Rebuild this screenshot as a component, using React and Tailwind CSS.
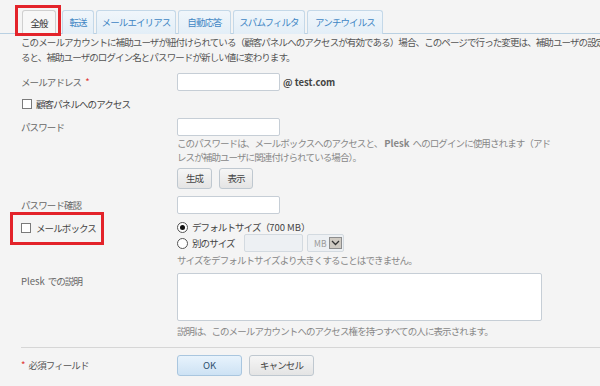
import React from 'react';

const tabs = [
  { label: '全般', w: 'w-[34px]', active: true },
  { label: '転送', w: 'w-[32px] ml-[6px]' },
  { label: 'メールエイリアス', w: 'w-[80px] ml-[2px]' },
  { label: '自動応答', w: 'w-[53px] ml-[2px]' },
  { label: 'スパムフィルタ', w: 'w-[72px] ml-[2px]' },
  { label: 'アンチウイルス', w: 'w-[76px] ml-[2px]' },
];

function Checkbox() {
  return <span className="inline-block w-[10px] h-[10px] border border-[#7a7a7a] bg-white shrink-0" />;
}

function Radio({ checked }) {
  return (
    <span className="w-[11px] h-[11px] rounded-full border border-[#555] bg-white flex items-center justify-center shrink-0">
      {checked && <span className="w-[5px] h-[5px] rounded-full bg-[#111]" />}
    </span>
  );
}

function Input({ className = '' }) {
  return <div className={`h-[18px] w-[103px] bg-white border border-[#c6ced6] rounded-[2px] ${className}`} />;
}

function GreyButton({ children, className = '' }) {
  return (
    <button className={`h-[21px] border border-[#bfc8d0] rounded-[3px] bg-gradient-to-b from-[#f6f6f6] to-[#e4e4e4] text-[#444] flex items-center justify-center ${className}`}>
      {children}
    </button>
  );
}

export default function App() {
  return (
    <div className="relative w-[600px] h-[386px] overflow-hidden bg-[#f4f4f4] text-[9.5px] tracking-[-0.9px] leading-[15px] text-[#666] font-['Noto_Sans_CJK_JP','Noto_Sans',sans-serif]">
      {/* tabs */}
      <div className="pt-[10px] pl-[22px] flex border-b border-[#b9d0e2] h-[34px]">
        {tabs.map((t) => (
          <div
            key={t.label}
            className={`${t.w} h-[24px] flex items-center justify-center rounded-t-[3px] border border-b-0 ${
              t.active
                ? 'bg-[#f7f7f7] border-[#cfcfcf] text-[#333] -mb-px h-[25px]'
                : 'bg-gradient-to-b from-[#f0f6fb] to-[#e3eef7] border-[#c4d8e8] text-[#3f86c4]'
            }`}
          >
            {t.label}
          </div>
        ))}
      </div>

      {/* intro */}
      <div className="pl-[21px] pt-[1px] text-[#555] whitespace-nowrap">
        <p>このメールアカウントに補助ユーザが紐付けられている（顧客パネルへのアクセスが有効である）場合、このページで行った変更は、補助ユーザの設定</p>
        <p>ると、補助ユーザのログイン名とパスワードが新しい値に変わります。</p>
      </div>

      <div className="pl-[21px]">
        {/* email */}
        <div className="flex items-center mt-[8px] h-[18px]">
          <div className="w-[156px]">
            メールアドレス<span className="ml-[4px] text-[#e0332e]">*</span>
          </div>
          <Input />
          <span className="ml-[3px] font-bold text-[#444] tracking-normal">@ test.com</span>
        </div>

        {/* panel access */}
        <div className="flex items-center gap-[4px] mt-[4px] h-[18px] pl-[1px] text-[#444]">
          <Checkbox />
          <span>顧客パネルへのアクセス</span>
        </div>

        {/* password */}
        <div className="flex mt-[5px]">
          <div className="w-[156px] leading-[18px]">パスワード</div>
          <div>
            <Input />
            <p className="leading-[14px] text-[#888] whitespace-nowrap">
              このパスワードは、メールボックスへのアクセスと、<span className="ml-[2px] mr-[3px] font-semibold tracking-normal">Plesk</span>へのログインに使用されます（アド
              <br />
              レスが補助ユーザに関連付けられている場合）。
            </p>
            <div className="flex gap-[7px] mt-[4px]">
              <GreyButton className="w-[35px]">生成</GreyButton>
              <GreyButton className="w-[34px]">表示</GreyButton>
            </div>
          </div>
        </div>

        {/* confirm */}
        <div className="flex items-center mt-[7px] h-[18px]">
          <div className="w-[156px]">パスワード確認</div>
          <Input />
        </div>

        {/* mailbox */}
        <div className="flex mt-[6px]">
          <div className="w-[156px] flex items-center gap-[5px] h-[16px] text-[#444]">
            <Checkbox />
            <span>メールボックス</span>
          </div>
          <div>
            <div className="flex items-center gap-[4px] h-[14px] text-[#444]">
              <Radio checked />
              <span>
                デフォルトサイズ（<span className="tracking-normal">700 MB</span>）
              </span>
            </div>
            <div className="flex items-center h-[18px] text-[#444]">
              <Radio />
              <span className="ml-[4px] w-[52px]">別のサイズ</span>
              <div className="w-[59px] h-[18px] bg-[#edf0f3] border border-[#d3dae0] rounded-[2px]" />
              <div className="ml-[4px] w-[37px] h-[18px] bg-[#edf0f3] border border-[#d3dae0] rounded-[2px] flex items-center pl-[6px] gap-[2px] text-[#999] tracking-normal text-[8.5px]">
                <span>MB</span>
                <span className="w-[13px] h-[12px] bg-[#cfcac2] border border-[#8d8d8d] flex items-center justify-center">
                  <svg width="9" height="6" viewBox="0 0 9 6">
                    <path d="M1 1 L4.5 4.5 L8 1" fill="none" stroke="#333" strokeWidth="1.3" />
                  </svg>
                </span>
              </div>
            </div>
            <p className="leading-[14px] mt-[1px] text-[#888]">サイズをデフォルトサイズより大きくすることはできません。</p>
          </div>
        </div>

        {/* description */}
        <div className="flex mt-[6px]">
          <div className="w-[156px] leading-[14px] pt-[1px]">
            <span className="tracking-normal mr-[3px]">Plesk</span>での説明
          </div>
          <div>
            <div className="w-[365px] h-[48px] bg-white border border-[#c6ced6] rounded-[2px]" />
            <p className="leading-[14px] mt-[3px] text-[#888]">説明は、このメールアカウントへのアクセス権を持つすべての人に表示されます。</p>
          </div>
        </div>

        {/* footer */}
        <div className="border-t border-[#d6d6d6] mt-[9px]" />
        <div className="flex items-center mt-[7px]">
          <div className="w-[156px] text-[#555]">
            <span className="text-[#e0332e] mr-[4px]">*</span>必須フィールド
          </div>
          <button className="w-[65px] h-[21px] rounded-[3px] border border-[#a9c6df] bg-gradient-to-b from-[#e8f3fc] to-[#cde2f4] text-[#2d4f6e] tracking-normal">
            OK
          </button>
          <GreyButton className="ml-[7px] w-[65px]">キャンセル</GreyButton>
        </div>
      </div>

      {/* annotation boxes */}
      <div className="absolute left-[15px] top-[5px] w-[46px] h-[31px] border-[3px] border-[#e3232a]" />
      <div className="absolute left-[10px] top-[212px] w-[94px] h-[33px] border-[3px] border-[#e3232a]" />
    </div>
  );
}
